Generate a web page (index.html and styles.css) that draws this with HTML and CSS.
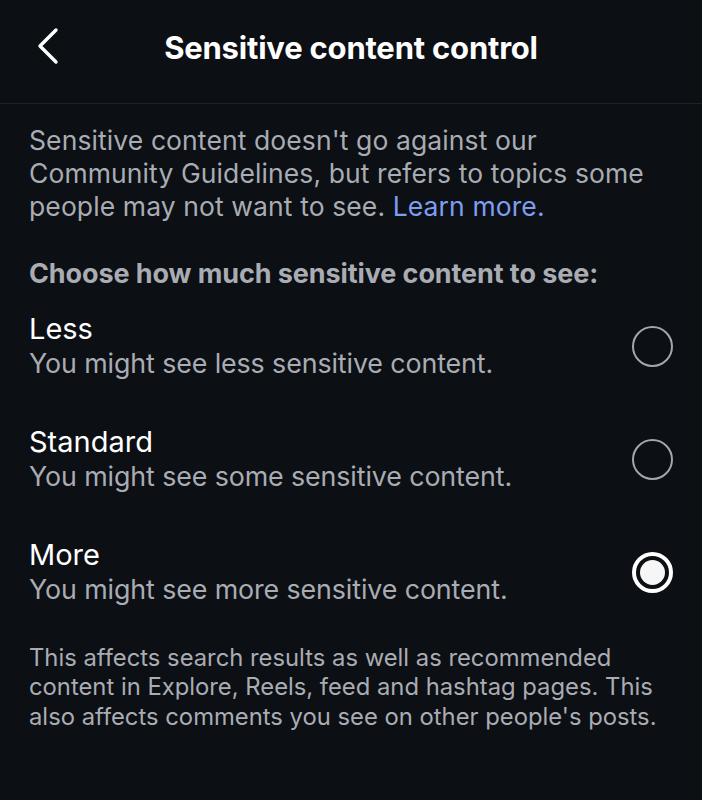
FILE: index.html
```html
<!DOCTYPE html>
<html>
<head>
<meta charset="utf-8">
<link rel="stylesheet" href="styles.css">
</head>
<body>
<div class="screen">
  <header class="header">
    <button class="back" aria-label="Back">
      <svg width="26" height="38" viewBox="0 0 26 38"><path d="M21 3 L5 19 L21 35" fill="none" stroke="#fff" stroke-width="3.4" stroke-linecap="round" stroke-linejoin="round"/></svg>
    </button>
    <h1 class="title">Sensitive content control</h1>
  </header>
  <main class="content">
    <p class="intro">Sensitive content doesn't go against our Community Guidelines, but refers to topics some people may not want to see. <a class="link" href="#">Learn more.</a></p>
    <h2 class="choose">Choose how much sensitive content to see:</h2>
    <div class="options">
      <div class="option">
        <div class="option-text">
          <div class="option-title">Less</div>
          <div class="option-sub">You might see less sensitive content.</div>
        </div>
        <span class="radio"></span>
      </div>
      <div class="option">
        <div class="option-text">
          <div class="option-title">Standard</div>
          <div class="option-sub">You might see some sensitive content.</div>
        </div>
        <span class="radio"></span>
      </div>
      <div class="option">
        <div class="option-text">
          <div class="option-title">More</div>
          <div class="option-sub">You might see more sensitive content.</div>
        </div>
        <span class="radio selected"></span>
      </div>
    </div>
    <p class="footnote">This affects search results as well as recommended content in Explore, Reels, feed and hashtag pages. This also affects comments you see on other people's posts.</p>
  </main>
</div>
</body>
</html>
```
FILE: styles.css
```css
html, body {
  margin: 0;
  padding: 0;
  background: #0c0f14;
}
body {
  font-family: Inter, "Noto Sans", sans-serif;
  color: #a9acb3;
  width: 702px;
  height: 800px;
  overflow: hidden;
}
.header {
  height: 103px;
  border-bottom: 1px solid #1f2227;
  display: flex;
  align-items: center;
  justify-content: center;
  position: relative;
}
.back {
  position: absolute;
  left: 35px;
  top: 27px;
  background: none;
  border: 0;
  padding: 0;
  display: flex;
}
.title {
  margin: 0 0 9px 0;
  color: #fff;
  font-size: 31px;
  font-weight: 700;
  letter-spacing: -0.2px;
}
.content {
  padding: 20px 29px 0 29px;
}
.intro {
  margin: 0;
  max-width: 630px;
  font-size: 26.5px;
  line-height: 33px;
  letter-spacing: 0.1px;
}
.link {
  color: #7f9df2;
  text-decoration: none;
}
.choose {
  margin: 34px 0 0 0;
  font-size: 27px;
  font-weight: 700;
  line-height: 33px;
  letter-spacing: -0.1px;
}
.options {
  display: flex;
  flex-direction: column;
  gap: 43px;
  margin-top: 21px;
}
.option {
  display: flex;
  align-items: center;
  justify-content: space-between;
}
.option-title {
  color: #fff;
  font-size: 29px;
  line-height: 35px;
}
.option-sub {
  font-size: 26.8px;
  line-height: 35px;
  letter-spacing: -0.1px;
}
.radio {
  width: 37px;
  height: 37px;
  border: 2px solid #a3a6ad;
  border-radius: 50%;
  margin-right: 0;
  box-sizing: content-box;
}
.radio.selected {
  width: 33px;
  height: 33px;
  border: 4px solid #fff;
  position: relative;
}
.radio.selected::after {
  content: "";
  position: absolute;
  left: 4px;
  top: 4px;
  width: 25px;
  height: 25px;
  border-radius: 50%;
  background: #f6f6f6;
}
.footnote {
  margin: 35.5px 0 0 0;
  max-width: 636px;
  font-size: 23.8px;
  line-height: 29.5px;
  letter-spacing: 0;
}
```
